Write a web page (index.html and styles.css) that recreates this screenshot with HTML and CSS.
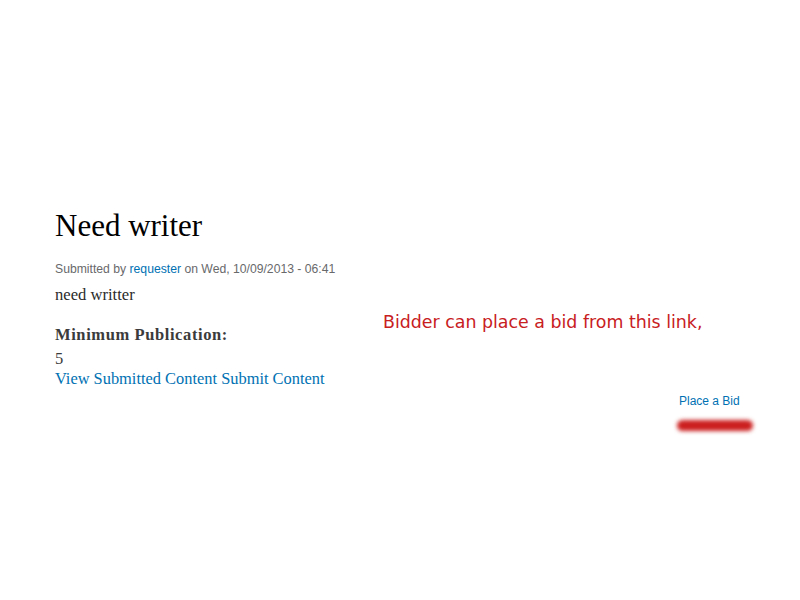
FILE: index.html
```html
<!DOCTYPE html>
<html>
<head>
<meta charset="utf-8">
<link rel="stylesheet" href="styles.css">
</head>
<body>
<div class="page">
  <article class="node">
    <h1 class="title">Need writer</h1>
    <div class="meta">Submitted by <a href="#" class="user">requester</a> on Wed, 10/09/2013 - 06:41</div>
    <div class="body">need writter</div>
    <div class="field">
      <div class="field-label">Minimum Publication:</div>
      <div class="field-item">5</div>
    </div>
    <div class="links"><a href="#">View Submitted Content</a> <a href="#">Submit Content</a></div>
  </article>
  <div class="bid-row">
    <div class="bid-box">
      <a href="#" class="bid">Place a Bid</a>
      <div class="scribble"></div>
    </div>
  </div>
  <div class="note">Bidder can place a bid from this link,</div>
</div>
</body>
</html>
```
FILE: styles.css
```css
html, body {
  margin: 0;
  padding: 0;
  background: #fff;
}
.page {
  position: relative;
  width: 800px;
  height: 600px;
  padding-top: 207px;
  box-sizing: border-box;
}
.node {
  padding-left: 55px;
  font-family: "Liberation Serif", Georgia, serif;
  color: #3b3b3b;
}
.title {
  margin: 0;
  font-family: "Liberation Serif", Georgia, serif;
  font-weight: normal;
  font-size: 31px;
  line-height: 38px;
  color: #000;
}
.meta {
  margin-top: 16px;
  font-family: "Liberation Sans", Arial, sans-serif;
  font-size: 12.2px;
  line-height: 16px;
  color: #68696b;
}
a {
  color: #0071b3;
  text-decoration: none;
}
.body {
  margin-top: 7px;
  font-size: 16.6px;
  line-height: 22px;
  color: #2b2b2b;
}
.field {
  margin-top: 18px;
}
.field-label {
  font-weight: bold;
  font-size: 16.5px;
  letter-spacing: 0.6px;
  line-height: 22px;
  color: #3b3b3b;
}
.field-item {
  margin-top: 3px;
  font-size: 16.5px;
  line-height: 20px;
}
.links {
  font-size: 16.4px;
  line-height: 20px;
}
.bid-row {
  display: flex;
  justify-content: flex-end;
  padding-right: 47px;
  margin-top: 4px;
}
.bid-box {
  display: flex;
  flex-direction: column;
  align-items: flex-start;
}
.bid {
  margin-left: 2px;
  margin-right: 2px;
  font-family: "Liberation Sans", Arial, sans-serif;
  font-size: 12px;
  line-height: 16px;
}
.scribble {
  margin-top: 11px;
  width: 76px;
  height: 11px;
  background: #cc1f1f;
  border-radius: 6px;
  filter: blur(2px);
}
.note {
  position: absolute;
  left: 383px;
  top: 312px;
  font-family: "DejaVu Sans", "Open Sans", sans-serif;
  font-size: 17.4px;
  color: #c8201e;
}
```
